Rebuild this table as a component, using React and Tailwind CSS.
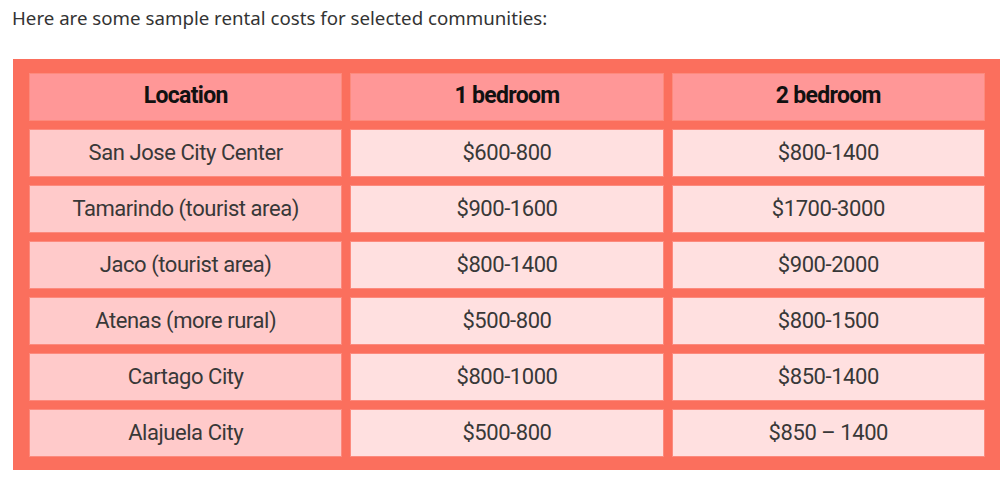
const rows = [
  ["San Jose City Center", "$600-800", "$800-1400"],
  ["Tamarindo (tourist area)", "$900-1600", "$1700-3000"],
  ["Jaco (tourist area)", "$800-1400", "$900-2000"],
  ["Atenas (more rural)", "$500-800", "$800-1500"],
  ["Cartago City", "$800-1000", "$850-1400"],
  ["Alajuela City", "$500-800", "$850 – 1400"],
];

const headers = ["Location", "1 bedroom", "2 bedroom"];

export default function App() {
  return (
    <div className="w-[1003px] h-[477px] bg-white">
      <p className="pl-[12px] pt-[5px] text-[18.7px] leading-[25px] text-[#333] font-['Noto_Sans',sans-serif]">
        Here are some sample rental costs for selected communities:
      </p>
      <div className="ml-[13px] mt-[29px] w-[987px] bg-[#fb6f5d] pt-[14px] pb-[13px] pl-[16px] pr-[15px] grid grid-cols-3 gap-[8px] font-['Roboto',sans-serif]">
        {headers.map((h) => (
          <div
            key={h}
            className="h-[48px] pb-[2px] flex items-center justify-center bg-[#ff9797] border border-[#fc8a7d] text-[23px] font-bold text-[#111] tracking-[-0.03em]"
          >
            {h}
          </div>
        ))}
        {rows.map((row) =>
          row.map((cell, i) => (
            <div
              key={row[0] + i}
              className={
                "h-[48px] pb-[2px] flex items-center justify-center border border-[#fc8a7d] text-[22px] text-[#383838] tracking-[-0.02em] " +
                (i === 0 ? "bg-[#ffcaca]" : "bg-[#ffe0e0]")
              }
            >
              {cell}
            </div>
          ))
        )}
      </div>
    </div>
  );
}
